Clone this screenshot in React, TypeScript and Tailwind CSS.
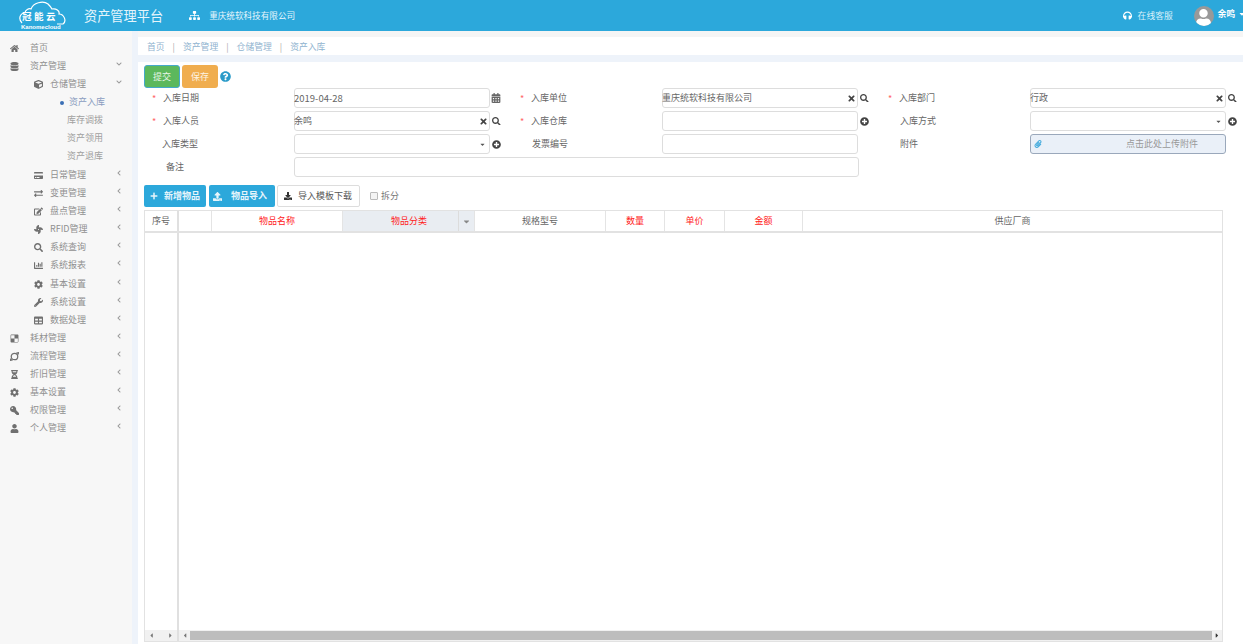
import React from "react";
import {
  FaHome, FaDatabase, FaCube, FaCalendarAlt, FaSearch, FaTimes, FaPlusCircle, FaPlus, FaUpload, FaDownload,
  FaSitemap, FaHeadphones, FaPaperclip, FaExchangeAlt, FaEdit, FaChartBar, FaCog, FaWrench, FaTable,
  FaHourglassHalf, FaKey, FaUser, FaQuestionCircle, FaCreditCard, FaFan, FaDelicious,
  FaChevronDown, FaChevronLeft, FaCaretDown, FaCaretLeft, FaCaretRight,
} from "react-icons/fa";

const font = "font-['Noto_Sans_CJK_SC','Noto_Sans',sans-serif]";

function Chevron({ open }: { open?: boolean }) {
  return open ? (
    <FaChevronDown className="absolute right-[10px] top-[4px] text-[6px] text-[#999]" />
  ) : (
    <FaChevronLeft className="absolute right-[10px] top-[4px] text-[6px] text-[#999]" />
  );
}

function TopItem({ icon, label, chev = "left" }: { icon: React.ReactNode; label: string; chev?: "left" | "down" | "none" }) {
  return (
    <div className="relative flex h-[18px] items-center pl-[10px] text-[#909090]">
      <span className="flex w-[20px] items-center text-[9px] text-[#707070]">{icon}</span>
      <span>{label}</span>
      {chev !== "none" && <Chevron open={chev === "down"} />}
    </div>
  );
}

function SubItem({ icon, label, open }: { icon: React.ReactNode; label: string; open?: boolean }) {
  return (
    <div className="relative flex h-[18px] items-center pl-[34px] text-[#909090]">
      <span className="flex w-[16px] items-center text-[9px] text-[#707070]">{icon}</span>
      <span>{label}</span>
      <Chevron open={open} />
    </div>
  );
}

function Leaf({ label, active }: { label: string; active?: boolean }) {
  return (
    <div className="relative flex h-[18px] items-center pl-[67px] text-[#a0a0a0]">
      {active && <span className="absolute left-[60px] top-[8px] h-[4px] w-[4px] rounded-full bg-[#3b6fb5]" />}
      <span className={active ? "ml-[2px] text-[#8a9cc0]" : ""}>{label}</span>
    </div>
  );
}

function Label({ text, star }: { text: string; star?: boolean }) {
  return (
    <div className="relative h-full text-[9px] leading-[19px] text-[#666]">
      {star && <span className="absolute left-[-11px] top-[1px] text-[#f66]">*</span>}
      {text}
    </div>
  );
}

function Input({ value, trailing, w = "w-[196px]", size = "text-[9px]" }: { value?: string; trailing?: React.ReactNode; w?: string; size?: string }) {
  return (
    <div className={`relative flex h-[20px] shrink-0 ${w} items-center rounded-[3px] border border-[#ddd] bg-white ${size} text-[#666]`}>
      <span className="-ml-[1px]">{value}</span>
      {trailing}
    </div>
  );
}

const Clear = () => <FaTimes className="absolute right-[1px] top-[5px] text-[9px] text-[#444]" />;
const Caret = () => <FaCaretDown className="absolute right-[3px] top-[6px] text-[7px] text-[#555]" />;
const Search = () => <FaSearch className="ml-[2px] shrink-0 text-[8.5px] text-[#444]" />;
const PlusC = () => <FaPlusCircle className="ml-[2px] shrink-0 text-[9px] text-[#444]" />;

function Field({ label, star, labelX, input, after }: { label: string; star?: boolean; labelX: string; input: React.ReactNode; after?: React.ReactNode }) {
  return (
    <div className="flex h-[20px] items-center">
      <div className={`h-full w-[150px] shrink-0 ${labelX}`}>
        <Label text={label} star={star} />
      </div>
      {input}
      {after}
    </div>
  );
}

function Th({ w, text, red, bg, grow }: { w?: string; text?: string; red?: boolean; bg?: string; grow?: boolean }) {
  return (
    <div className={`flex h-full items-center justify-center border-r border-[#e4e4e4] text-[9px] ${w ?? ""} ${grow ? "flex-1 border-r-0" : ""} ${bg ?? ""} ${red ? "text-[#f22]" : "text-[#666]"}`}>
      {text}
    </div>
  );
}

export default function App() {
  return (
    <div className={`flex h-[644px] w-[1243px] flex-col overflow-hidden bg-white ${font}`}>
      <header className="flex h-[31px] shrink-0 items-center bg-[#2ca8db] text-white">
        <div className="relative ml-[19px] h-[31px] w-[47px] shrink-0">
          <svg viewBox="0 0 47 24" className="absolute left-0 top-[1px] h-[24px] w-[47px]" fill="none" stroke="#fff" strokeWidth="1.2">
            <path d="M3 22 C-1 18 1 12 6 12 C6 9 10 7 12 8 C14 2 24 -1 29 3 C31 5 32 6 33 8 C37 7 41 10 40 13 C45 13 48 20 44 23 L38 23" />
          </svg>
          <span className="absolute left-[3px] top-[11px] text-[9.5px] font-bold leading-[11px] tracking-[2.5px]">冠能云</span>
          <span className="absolute left-[2px] top-[24px] font-['Liberation_Sans',sans-serif] text-[6px] font-bold leading-[6px]">Kanomecloud</span>
        </div>
        <span className="ml-[18px] text-[13.2px] text-[#e6f5fb]">资产管理平台</span>
        <FaSitemap className="ml-[26px] text-[11px]" />
        <span className="ml-[9px] text-[8.6px] text-[#e6f5fb]">重庆统软科技有限公司</span>
        <div className="flex-1" />
        <FaHeadphones className="text-[9px]" />
        <span className="ml-[6px] text-[8.8px] text-[#d8f0fa]">在线客服</span>
        <div className="ml-[21px] flex h-[20px] w-[20px] items-end justify-center overflow-hidden rounded-full bg-[#999]">
          <FaUser className="text-[17px] text-white" />
        </div>
        <span className="mb-[5px] ml-[4px] text-[8.6px] font-bold">余鸣</span>
        <FaCaretDown className="-mr-[3px] mb-[4px] ml-[3px] text-[8px]" />
      </header>

      <div className="flex min-h-0 flex-1">
        <aside className="w-[132px] shrink-0 bg-[#f7f7f7] pt-[8px] text-[9px]">
          <TopItem icon={<FaHome />} label="首页" chev="none" />
          <TopItem icon={<FaDatabase />} label="资产管理" chev="down" />
          <SubItem icon={<FaCube />} label="仓储管理" open />
          <Leaf label="资产入库" active />
          <Leaf label="库存调拨" />
          <Leaf label="资产领用" />
          <Leaf label="资产退库" />
          <div className="h-[1px]" />
          <SubItem icon={<FaCreditCard />} label="日常管理" />
          <SubItem icon={<FaExchangeAlt />} label="变更管理" />
          <SubItem icon={<FaEdit />} label="盘点管理" />
          <SubItem icon={<FaFan />} label="RFID管理" />
          <SubItem icon={<FaSearch />} label="系统查询" />
          <SubItem icon={<FaChartBar />} label="系统报表" />
          <div className="h-[1px]" />
          <SubItem icon={<FaCog />} label="基本设置" />
          <SubItem icon={<FaWrench />} label="系统设置" />
          <SubItem icon={<FaTable />} label="数据处理" />
          <TopItem icon={<FaDelicious />} label="耗材管理" />
          <TopItem
            icon={
              <svg viewBox="0 0 10 10" className="h-[9px] w-[9px]" fill="none" stroke="currentColor" strokeWidth="1.4">
                <circle cx="5" cy="5" r="3.6" />
                <path d="M7 1.2 L9.4 0.8 L8.8 3 M3 8.8 L0.6 9.2 L1.2 7" />
              </svg>
            }
            label="流程管理"
          />
          <TopItem icon={<FaHourglassHalf />} label="折旧管理" />
          <TopItem icon={<FaCog />} label="基本设置" />
          <TopItem icon={<FaKey className="-scale-x-100" />} label="权限管理" />
          <TopItem icon={<FaUser />} label="个人管理" />
        </aside>

        <main className="flex min-w-0 flex-1 flex-col bg-[#eef3fa] pl-[6px]">
          <div className="h-[6px] shrink-0 bg-[#f5f5f5]" />
          <nav className="flex h-[18px] shrink-0 items-center gap-[8px] bg-white pl-[9px] pt-[2px] text-[8.8px] text-[#8fb3cf]">
            <span>首页</span><span className="text-[#aaa]">|</span>
            <span>资产管理</span><span className="text-[#aaa]">|</span>
            <span>仓储管理</span><span className="text-[#aaa]">|</span>
            <span>资产入库</span>
          </nav>
          <div className="h-[7px] shrink-0" />

          <section className="flex min-h-0 flex-1 flex-col bg-white pl-[6px] pt-[3px]">
            <div className="flex h-[23px] items-center">
              <button className="h-[23px] w-[36px] rounded-[3px] border border-[#46a9c9] bg-[#5cb85c] text-[9px] text-[#e8f6e8]">提交</button>
              <button className="ml-[2px] h-[23px] w-[36px] rounded-[3px] bg-[#f0ad4e] text-[9px] text-[#fdf3e2]">保存</button>
              <FaQuestionCircle className="ml-[2px] text-[11px] text-[#2a9bc9]" />
            </div>

            <div className="grid grid-cols-[368px_368px_363px] gap-y-[3px]">
              <Field label="入库日期" star labelX="pl-[19px]" input={<Input value="2019-04-28" size="text-[9.5px]" />} after={<FaCalendarAlt className="ml-[1px] shrink-0 text-[10px] text-[#666]" />} />
              <Field label="入库单位" star labelX="pl-[19px]" input={<Input value="重庆统软科技有限公司" trailing={<Clear />} />} after={<Search />} />
              <Field label="入库部门" star labelX="pl-[19px]" input={<Input value="行政" trailing={<Clear />} />} after={<Search />} />
              <Field label="入库人员" star labelX="pl-[19px]" input={<Input value="余鸣" trailing={<Clear />} />} after={<Search />} />
              <Field label="入库仓库" star labelX="pl-[19px]" input={<Input />} after={<PlusC />} />
              <Field label="入库方式" labelX="pl-[20px]" input={<Input trailing={<Caret />} />} after={<PlusC />} />
              <Field label="入库类型" labelX="pl-[18px]" input={<Input trailing={<Caret />} />} after={<PlusC />} />
              <Field label="发票编号" labelX="pl-[20px]" input={<Input />} />
              <div className="flex h-[20px] items-center">
                <div className="h-full w-[150px] shrink-0 pl-[20px]"><Label text="附件" /></div>
                <div className="relative flex h-[20px] w-[196px] shrink-0 items-center justify-center rounded-[3px] border border-[#9aa8bb] bg-[#eaf0f8] pl-[68px] text-[9px] text-[#999]">
                  <FaPaperclip className="absolute left-[3px] top-[5px] text-[8px] text-[#3fa9dc]" />
                  点击此处上传附件
                </div>
              </div>
            </div>
            <div className="mt-[3px] flex h-[20px] items-center">
              <div className="h-full w-[150px] shrink-0 pl-[22px]"><Label text="备注" /></div>
              <Input w="w-[565px]" />
            </div>

            <div className="mt-[8px] flex h-[22px] items-center text-[9px]">
              <button className="flex h-[22px] w-[62px] items-center rounded-[2px] bg-[#2ca8db] pl-[6px] font-bold text-[#e6f5fb]">
                <FaPlus className="mr-[6px] text-[8px]" />新增物品
              </button>
              <button className="ml-[3px] flex h-[22px] w-[66px] items-center rounded-[2px] bg-[#2ca8db] pl-[4px] font-bold text-[#e6f5fb]">
                <FaUpload className="mr-[9px] text-[9px]" />物品导入
              </button>
              <button className="ml-[2px] flex h-[22px] w-[83px] items-center rounded-[2px] border border-[#ddd] bg-white pl-[6px] text-[#555]">
                <FaDownload className="mr-[6px] text-[8px] text-[#333]" />导入模板下载
              </button>
              <span className="ml-[10px] h-[8px] w-[8px] rounded-[1px] border border-[#bbb] bg-[#f4f4f4]" />
              <span className="ml-[3px] text-[#777]">拆分</span>
            </div>

            <div className="mb-[2px] mt-[3px] flex min-h-0 w-[1079px] flex-1 flex-col border border-[#e2e2e2]">
              <div className="flex h-[22px] shrink-0 items-stretch border-b-2 border-[#e2e2e2]">
                <Th w="w-[34px] border-r-2 border-r-[#e0e0e0]" text="序号" />
                <Th w="w-[33px]" />
                <Th w="w-[131px]" text="物品名称" red />
                <div className="relative flex w-[132px] items-center justify-center border-r border-[#e4e4e4] bg-[#e9edf2] pl-[1px] text-[9px] text-[#f22]">
                  <span className="absolute inset-y-0 left-[115px] w-[1px] bg-[#dcdcdc]" />
                  <span className="relative">物品分类</span>
                  <span className="absolute inset-y-0 right-0 flex w-[15px] items-center justify-center">
                    <FaCaretDown className="text-[9px] text-[#888]" />
                  </span>
                </div>
                <Th w="w-[131px]" text="规格型号" />
                <Th w="w-[59px]" text="数量" red />
                <Th w="w-[60px]" text="单价" red />
                <Th w="w-[78px]" text="金额" red />
                <Th grow text="供应厂商" />
              </div>
              <div className="flex min-h-0 flex-1">
                <div className="w-[34px] shrink-0 border-r-2 border-[#e0e0e0]" />
                <div className="flex-1" />
              </div>
              <div className="flex h-[11px] shrink-0">
                <div className="flex w-[34px] shrink-0 items-center justify-between border-r-2 border-[#e0e0e0] bg-[#f1f1f1] px-[3px] text-[7px] text-[#777]">
                  <FaCaretLeft /><FaCaretRight />
                </div>
                <div className="flex flex-1 items-center bg-[#f1f1f1] text-[7px] text-[#777]">
                  <FaCaretLeft className="ml-[2px] w-[8px]" />
                  <div className="mx-[1px] h-[9px] flex-1 bg-[#bdbdbd]" />
                  <FaCaretRight className="mr-[1px] w-[8px] text-[#333]" />
                </div>
              </div>
            </div>
          </section>
        </main>
      </div>
    </div>
  );
}
